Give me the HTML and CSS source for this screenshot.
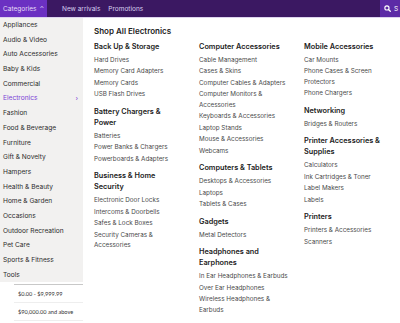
FILE: index.html
```html
<!DOCTYPE html>
<html lang="en">
<head>
    <meta charset="UTF-8"/>
    <meta name="viewport" content="width=device-width, initial-scale=1.0"/>
    <title>Shop All Electronics</title>
    <link rel="stylesheet" href="styles.css">
</head>
<body>
    <header class="topbar">
        <button class="cat-btn">Categories <span class="caret">&#8963;</span></button>
        <nav class="top-links">
            <a href="#">New arrivals</a>
            <a href="#">Promotions</a>
        </nav>
        <div class="search-btn">
            <svg width="7" height="7" viewBox="0 0 10 10">
                <circle cx="4.2" cy="4.2" r="3" fill="none" stroke="#fff" stroke-width="1.6"/>
                <line x1="6.4" y1="6.4" x2="9" y2="9" stroke="#fff" stroke-width="1.8" stroke-linecap="round"/>
            </svg>
            <span>S</span>
        </div>
    </header>

    <div class="menu">
        <aside class="side">
            <ul class="cat-list">
                <li>Appliances</li>
                <li>Audio &amp; Video</li>
                <li>Auto Accessories</li>
                <li>Baby &amp; Kids</li>
                <li>Commercial</li>
                <li class="active">Electronics <span class="chev">&rsaquo;</span></li>
                <li>Fashion</li>
                <li>Food &amp; Beverage</li>
                <li>Furniture</li>
                <li>Gift &amp; Novelty</li>
                <li>Hampers</li>
                <li>Health &amp; Beauty</li>
                <li>Home &amp; Garden</li>
                <li>Occasions</li>
                <li>Outdoor Recreation</li>
                <li>Pet Care</li>
                <li>Sports &amp; Fitness</li>
                <li>Tools</li>
            </ul>
            <div class="price-filter">
                <p>$0.00 - $9,999.99</p>
                <p>$90,000.00 and above</p>
            </div>
        </aside>

        <section class="panel">
            <h2>Shop All Electronics</h2>
            <div class="cols">
                <div class="col">
                    <div class="group">
                        <h3>Back Up &amp; Storage</h3>
                        <ul>
                            <li>Hard Drives</li>
                            <li>Memory Card Adapters</li>
                            <li>Memory Cards</li>
                            <li>USB Flash Drives</li>
                        </ul>
                    </div>
                    <div class="group">
                        <h3>Battery Chargers &amp; Power</h3>
                        <ul>
                            <li>Batteries</li>
                            <li>Power Banks &amp; Chargers</li>
                            <li>Powerboards &amp; Adapters</li>
                        </ul>
                    </div>
                    <div class="group">
                        <h3>Business &amp; Home Security</h3>
                        <ul>
                            <li>Electronic Door Locks</li>
                            <li>Intercoms &amp; Doorbells</li>
                            <li>Safes &amp; Lock Boxes</li>
                            <li>Security Cameras &amp; Accessories</li>
                        </ul>
                    </div>
                </div>
                <div class="col">
                    <div class="group">
                        <h3>Computer Accessories</h3>
                        <ul>
                            <li>Cable Management</li>
                            <li>Cases &amp; Skins</li>
                            <li>Computer Cables &amp; Adapters</li>
                            <li>Computer Monitors &amp; Accessories</li>
                            <li>Keyboards &amp; Accessories</li>
                            <li>Laptop Stands</li>
                            <li>Mouse &amp; Accessories</li>
                            <li>Webcams</li>
                        </ul>
                    </div>
                    <div class="group">
                        <h3>Computers &amp; Tablets</h3>
                        <ul>
                            <li>Desktops &amp; Accessories</li>
                            <li>Laptops</li>
                            <li>Tablets &amp; Cases</li>
                        </ul>
                    </div>
                    <div class="group">
                        <h3>Gadgets</h3>
                        <ul>
                            <li>Metal Detectors</li>
                        </ul>
                    </div>
                    <div class="group">
                        <h3>Headphones and Earphones</h3>
                        <ul>
                            <li>In Ear Headphones &amp; Earbuds</li>
                            <li>Over Ear Headphones</li>
                            <li>Wireless Headphones &amp; Earbuds</li>
                        </ul>
                    </div>
                </div>
                <div class="col">
                    <div class="group">
                        <h3>Mobile Accessories</h3>
                        <ul>
                            <li>Car Mounts</li>
                            <li>Phone Cases &amp; Screen Protectors</li>
                            <li>Phone Chargers</li>
                        </ul>
                    </div>
                    <div class="group">
                        <h3>Networking</h3>
                        <ul>
                            <li>Bridges &amp; Routers</li>
                        </ul>
                    </div>
                    <div class="group">
                        <h3>Printer Accessories &amp; Supplies</h3>
                        <ul>
                            <li>Calculators</li>
                            <li>Ink Cartridges &amp; Toner</li>
                            <li>Label Makers</li>
                            <li>Labels</li>
                        </ul>
                    </div>
                    <div class="group">
                        <h3>Printers</h3>
                        <ul>
                            <li>Printers &amp; Accessories</li>
                            <li>Scanners</li>
                        </ul>
                    </div>
                </div>
            </div>
        </section>
    </div>
</body>
</html>
```

FILE: styles.css
```css
body {
    margin: 0;
    width: 400px;
    height: 323px;
    overflow: hidden;
    background: #ffffff;
    font-family: Inter, "Noto Sans", sans-serif;
    color: #222;
}
ul {
    list-style: none;
    margin: 0;
    padding: 0;
}
.topbar {
    display: flex;
    align-items: stretch;
    height: 17px;
    background: #3b1862;
    border-bottom: 1px solid #ddd3ee;
}
.cat-btn {
    width: 47px;
    padding: 0 0 0 3px;
    border: none;
    background: #6b30c2;
    color: #e6ddf7;
    font-family: inherit;
    font-size: 6.5px;
    text-align: left;
    display: flex;
    align-items: center;
    gap: 3px;
}
.caret {
    font-size: 6px;
}
.top-links {
    display: flex;
    align-items: center;
    gap: 8px;
    padding-left: 15px;
    flex: 1;
}
.top-links a {
    color: #d9cff0;
    font-size: 6.5px;
    text-decoration: none;
}
.search-btn {
    width: 20px;
    margin-left: auto;
    background: #5c2ba6;
    display: flex;
    align-items: center;
    gap: 3px;
    padding-left: 4px;
    color: #fff;
    font-size: 6.5px;
    box-sizing: border-box;
}
.search-btn svg {
    flex: none;
}
.menu {
    display: flex;
}
.side {
    width: 83px;
    flex: none;
}
.cat-list {
    background: #f2f1f0;
}
.cat-list li {
    height: 14.7px;
    line-height: 14.7px;
    padding-left: 3px;
    font-size: 6.6px;
    color: #2b2b2b;
    position: relative;
}
.cat-list li.active {
    color: #7c3fd6;
}
.chev {
    position: absolute;
    right: 5px;
    top: 0;
}
.price-filter {
    margin: 2px 0 0 14px;
    border-top: 1px solid #c8c8c8;
    font-family: Lato, sans-serif;
    font-size: 5.6px;
    color: #333;
}
.price-filter p {
    margin: 0;
    padding-left: 4px;
    height: 17px;
    line-height: 17px;
    border-bottom: 1px solid #eee;
}
.panel {
    padding-left: 11px;
    flex: 1;
}
.panel h2 {
    margin: 7px 0 3.5px;
    font-size: 8px;
    line-height: 12px;
    font-weight: 600;
    color: #222;
}
.cols {
    display: flex;
}
.col {
    width: 105px;
    padding-right: 16px;
    box-sizing: border-box;
}
.group {
    margin-bottom: 6px;
}
.group h3 {
    max-width: 86px;
    margin: 0 0 3px;
    font-size: 7.3px;
    line-height: 11px;
    font-weight: 600;
    color: #222;
}
.group li {
    font-size: 6.3px;
    line-height: 10.5px;
    margin-bottom: 1px;
    color: #4a4a4a;
}
```
